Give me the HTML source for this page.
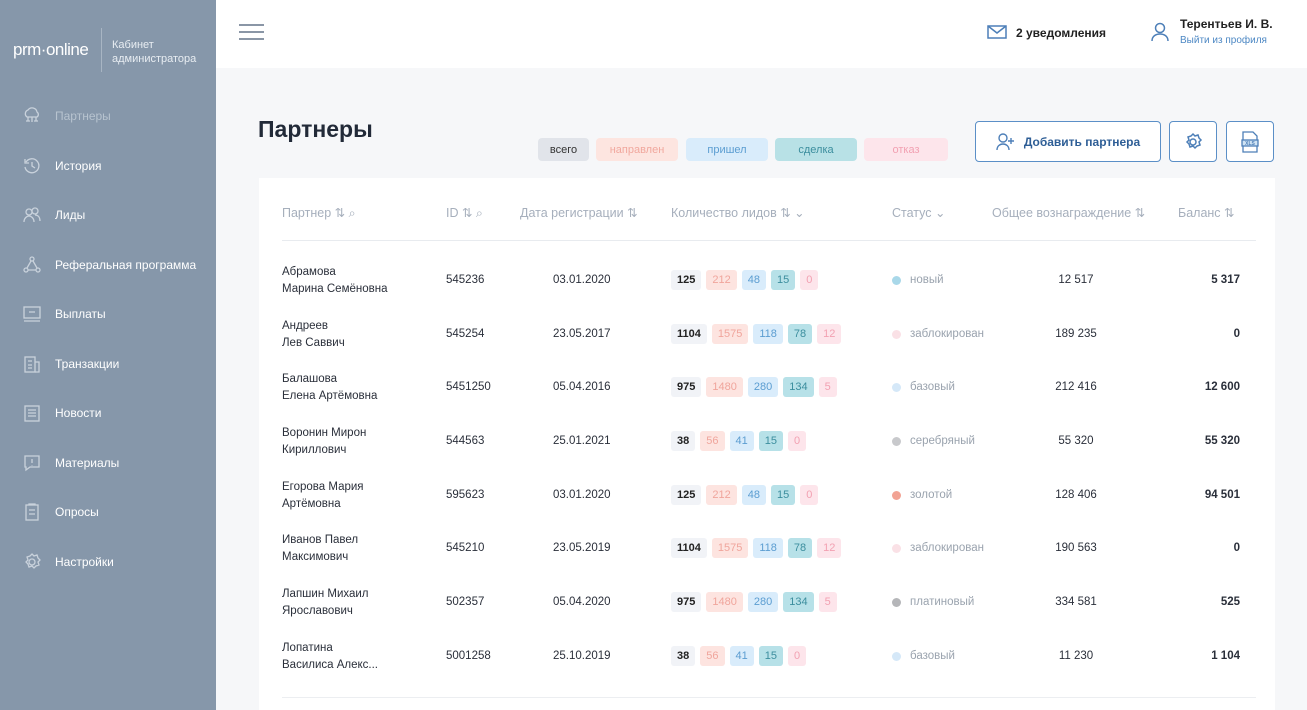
<!DOCTYPE html><html><head><meta charset="utf-8"><style>
*{box-sizing:border-box;margin:0;padding:0}
html,body{width:1307px;height:710px;overflow:hidden}
body{background:#f6f7f9;font-family:"Liberation Sans",sans-serif;position:relative;color:#2a2f3a}
.side{position:absolute;left:0;top:0;width:216px;height:710px;background:#8697aa;color:#fff}
.logo{position:absolute;left:13px;top:40px;font-size:17px;letter-spacing:-0.5px}
.vl{position:absolute;left:101px;top:28px;width:1px;height:44px;background:#a8b5c3}
.sub{position:absolute;left:112px;top:38px;font-size:11px;line-height:14px;color:#e8edf2}
.nav{position:absolute;left:22px;font-size:12px;display:flex;align-items:center}
.nav svg{width:20px;height:20px;margin-right:13px;stroke:#c9d2dc;fill:none;stroke-width:1.3}
.top{position:absolute;left:216px;top:0;right:0;height:68px;background:#fff}
.ham{position:absolute;left:239px;top:24px;width:25px}
.ham i{display:block;height:2px;background:#8a96a6;margin-bottom:5px}
.abs{position:absolute}
h1{position:absolute;left:258px;top:116px;font-size:23px;font-weight:bold;color:#222a38}
.tag{position:absolute;top:138px;height:23px;border-radius:4px;font-size:11px;display:flex;align-items:center;justify-content:center}
.btn{position:absolute;top:121px;height:41px;border:1px solid #5b8fc7;border-radius:4px;background:#fff;display:flex;align-items:center;justify-content:center;color:#2e5e96;font-size:12px;font-weight:bold}
.card{position:absolute;left:259px;top:178px;width:1016px;height:540px;background:#fff}
.hd{position:absolute;top:205px;font-size:12.5px;color:#a6afbc}
.line{position:absolute;left:282px;top:240px;width:974px;height:1px;background:#e8ebef}
.row{position:absolute;left:0;width:1307px;height:54px;font-size:11.5px}
.row .n{position:absolute;left:282px;top:4px;line-height:17px}
.row .id{position:absolute;left:446px;top:14px}
.row .d{position:absolute;left:553px;top:14px}
.chips{position:absolute;left:671px;top:10px;display:flex}
.c{height:20px;border-radius:3px;padding:0 6px;margin-right:5px;display:flex;align-items:center;font-size:11px}
.c1{background:#f1f3f7;color:#222;font-weight:bold}.c2{background:#fde4e0;color:#f0a59c}.c3{background:#d9ecfb;color:#5b9dd1}.c4{background:#b7e1e8;color:#3c8e9e}.c5{background:#fde5eb;color:#f2a1b2}
.st{position:absolute;left:892px;top:14px;color:#9aa3ae;display:flex;align-items:center}
.st i{width:9px;height:9px;border-radius:50%;margin-right:9px}
.rw{position:absolute;left:1020px;width:112px;text-align:center;top:14px}
.bal{position:absolute;right:67px;top:14px;font-weight:bold}
</style></head><body>
<div class="side">
<div class="logo">prm·online</div><div class="vl"></div><div class="sub">Кабинет<br>администратора</div>
<div class="nav" style="top:106px;color:#b7c3cf"><svg viewBox="0 0 20 20"><path d="M5 11a4 4 0 0 1 1-7 5 5 0 0 1 9 2 3 3 0 0 1 0 5zM6 11v4M10 11v5M14 11v4M4 15h4M12 15h4"/></svg>Партнеры</div>
<div class="nav" style="top:156px"><svg viewBox="0 0 20 20"><path d="M4 6a7 7 0 1 1-1 5M3 3v4h4M10 6v4l3 2"/></svg>История</div>
<div class="nav" style="top:205px"><svg viewBox="0 0 20 20"><circle cx="7" cy="7" r="3"/><circle cx="13" cy="6" r="3"/><path d="M2 17c0-4 3-6 5-6s5 2 5 6M13 10c3 0 5 2 5 6"/></svg>Лиды</div>
<div class="nav" style="top:255px"><svg viewBox="0 0 20 20"><circle cx="10" cy="4" r="2"/><circle cx="4" cy="15" r="2"/><circle cx="16" cy="15" r="2"/><path d="M9 6l-4 7M11 6l4 7M6 15h8"/></svg>Реферальная программа</div>
<div class="nav" style="top:304px"><svg viewBox="0 0 20 20"><rect x="2" y="3" width="16" height="11"/><path d="M2 17h16M7 8h6"/></svg>Выплаты</div>
<div class="nav" style="top:354px"><svg viewBox="0 0 20 20"><rect x="3" y="3" width="10" height="15"/><path d="M13 8h4v10h-4M6 7h4M6 11h4M6 14h4"/></svg>Транзакции</div>
<div class="nav" style="top:403px"><svg viewBox="0 0 20 20"><rect x="3" y="3" width="14" height="15"/><path d="M6 7h8M6 10h8M6 13h8"/></svg>Новости</div>
<div class="nav" style="top:453px"><svg viewBox="0 0 20 20"><path d="M3 3h14v11H8l-4 3v-3H3z"/><path d="M10 6v4M10 12v0.5"/></svg>Материалы</div>
<div class="nav" style="top:502px"><svg viewBox="0 0 20 20"><rect x="4" y="3" width="12" height="15"/><path d="M7 3V2h6v1M7 8h6M7 12h6"/></svg>Опросы</div>
<div class="nav" style="top:552px"><svg viewBox="0 0 20 20"><circle cx="10" cy="10" r="3"/><path d="M10 2l2 2 3-1 1 3 2 2-2 2 1 3-3 1-2 2-2-2-3 1-1-3-2-2 2-2-1-3 3-1z"/></svg>Настройки</div>
</div>
<div class="top"></div>
<div class="ham"><i></i><i></i><i></i></div>
<svg class="abs" style="left:987px;top:24px" width="20" height="16" viewBox="0 0 20 16" fill="none" stroke="#4d7fb8" stroke-width="1.5"><rect x="1" y="2" width="18" height="12"/><path d="M1 2l9 7 9-7"/></svg>
<div class="abs" style="left:1016px;top:26px;font-size:12px;font-weight:bold;color:#222">2 уведомления</div>
<svg class="abs" style="left:1151px;top:22px" width="18" height="20" viewBox="0 0 18 20" fill="none" stroke="#4d7fb8" stroke-width="1.5"><circle cx="9" cy="6" r="4.5"/><path d="M1 19c0-5 4-7 8-7s8 2 8 7"/></svg>
<div class="abs" style="left:1180px;top:17px;font-size:12px;font-weight:bold;color:#222">Терентьев И. В.</div>
<div class="abs" style="left:1180px;top:35px;font-size:10px;color:#4d88c4">Выйти из профиля</div>
<h1>Партнеры</h1>
<div class="tag" style="left:538px;width:51px;background:#e1e4ea;color:#333">всего</div>
<div class="tag" style="left:596px;width:82px;background:#fde5e0;color:#f1a89e">направлен</div>
<div class="tag" style="left:686px;width:82px;background:#d9ecfb;color:#5b9dd1">пришел</div>
<div class="tag" style="left:775px;width:82px;background:#b8e1e6;color:#3c8e9e">сделка</div>
<div class="tag" style="left:864px;width:84px;background:#fde5eb;color:#f2a1b2">отказ</div>
<div class="btn" style="left:975px;width:186px"><svg width="20" height="18" viewBox="0 0 20 18" fill="none" stroke="#4d7fb8" stroke-width="1.4" style="margin-right:8px"><circle cx="7" cy="5" r="4"/><path d="M1 17c0-4 3-6 6-6s6 2 6 6M15 5v6M12 8h6"/></svg>Добавить партнера</div>
<div class="btn" style="left:1169px;width:48px"><svg width="20" height="20" viewBox="0 0 20 20" fill="none" stroke="#4d7fb8" stroke-width="1.5"><circle cx="10" cy="10" r="3"/><path d="M10 2l2 2 3-1 1 3 2 2-2 2 1 3-3 1-2 2-2-2-3 1-1-3-2-2 2-2-1-3 3-1z"/></svg></div>
<div class="btn" style="left:1226px;width:48px"><svg width="20" height="22" viewBox="0 0 20 22" fill="none" stroke="#4d7fb8" stroke-width="1.3"><path d="M3 1h10l4 4v16H3z"/><rect x="2" y="9" width="16" height="6" fill="#cfe3f4"/><text x="10" y="14" font-size="5" text-anchor="middle" fill="#4d7fb8" stroke="none" font-family="Liberation Sans">XLS</text></svg></div>
<div class="card"></div>
<div class="hd" style="left:282px">Партнер ⇅ ⌕</div>
<div class="hd" style="left:446px">ID ⇅ ⌕</div>
<div class="hd" style="left:520px">Дата регистрации ⇅</div>
<div class="hd" style="left:671px">Количество лидов ⇅ ⌄</div>
<div class="hd" style="left:892px">Статус ⌄</div>
<div class="hd" style="left:992px">Общее вознаграждение ⇅</div>
<div class="hd" style="left:1178px">Баланс ⇅</div>
<div class="line"></div>

<div class="row" style="top:260px"><div class="n">Абрамова<br>Марина Семёновна</div><div class="id">545236</div><div class="d">03.01.2020</div><div class="chips"><span class="c c1">125</span><span class="c c2">212</span><span class="c c3">48</span><span class="c c4">15</span><span class="c c5">0</span></div><div class="st"><i style="background:#a9d8e9"></i>новый</div><div class="rw">12 517</div><div class="bal">5 317</div></div>
<div class="row" style="top:314px"><div class="n">Андреев<br>Лев Саввич</div><div class="id">545254</div><div class="d">23.05.2017</div><div class="chips"><span class="c c1">1104</span><span class="c c2">1575</span><span class="c c3">118</span><span class="c c4">78</span><span class="c c5">12</span></div><div class="st"><i style="background:#fae1e6"></i>заблокирован</div><div class="rw">189 235</div><div class="bal">0</div></div>
<div class="row" style="top:367px"><div class="n">Балашова<br>Елена Артёмовна</div><div class="id">5451250</div><div class="d">05.04.2016</div><div class="chips"><span class="c c1">975</span><span class="c c2">1480</span><span class="c c3">280</span><span class="c c4">134</span><span class="c c5">5</span></div><div class="st"><i style="background:#d5e8f8"></i>базовый</div><div class="rw">212 416</div><div class="bal">12 600</div></div>
<div class="row" style="top:421px"><div class="n">Воронин Мирон<br>Кириллович</div><div class="id">544563</div><div class="d">25.01.2021</div><div class="chips"><span class="c c1">38</span><span class="c c2">56</span><span class="c c3">41</span><span class="c c4">15</span><span class="c c5">0</span></div><div class="st"><i style="background:#c8c9cc"></i>серебряный</div><div class="rw">55 320</div><div class="bal">55 320</div></div>
<div class="row" style="top:475px"><div class="n">Егорова Мария<br>Артёмовна</div><div class="id">595623</div><div class="d">03.01.2020</div><div class="chips"><span class="c c1">125</span><span class="c c2">212</span><span class="c c3">48</span><span class="c c4">15</span><span class="c c5">0</span></div><div class="st"><i style="background:#f2a394"></i>золотой</div><div class="rw">128 406</div><div class="bal">94 501</div></div>
<div class="row" style="top:528px"><div class="n">Иванов Павел<br>Максимович</div><div class="id">545210</div><div class="d">23.05.2019</div><div class="chips"><span class="c c1">1104</span><span class="c c2">1575</span><span class="c c3">118</span><span class="c c4">78</span><span class="c c5">12</span></div><div class="st"><i style="background:#fae1e6"></i>заблокирован</div><div class="rw">190 563</div><div class="bal">0</div></div>
<div class="row" style="top:582px"><div class="n">Лапшин Михаил<br>Ярославович</div><div class="id">502357</div><div class="d">05.04.2020</div><div class="chips"><span class="c c1">975</span><span class="c c2">1480</span><span class="c c3">280</span><span class="c c4">134</span><span class="c c5">5</span></div><div class="st"><i style="background:#b5b6b9"></i>платиновый</div><div class="rw">334 581</div><div class="bal">525</div></div>
<div class="row" style="top:636px"><div class="n">Лопатина<br>Василиса Алекс...</div><div class="id">5001258</div><div class="d">25.10.2019</div><div class="chips"><span class="c c1">38</span><span class="c c2">56</span><span class="c c3">41</span><span class="c c4">15</span><span class="c c5">0</span></div><div class="st"><i style="background:#d5e8f8"></i>базовый</div><div class="rw">11 230</div><div class="bal">1 104</div></div>
<div class="abs" style="left:282px;top:697px;width:974px;height:1px;background:#eceef1"></div>
</body></html>
